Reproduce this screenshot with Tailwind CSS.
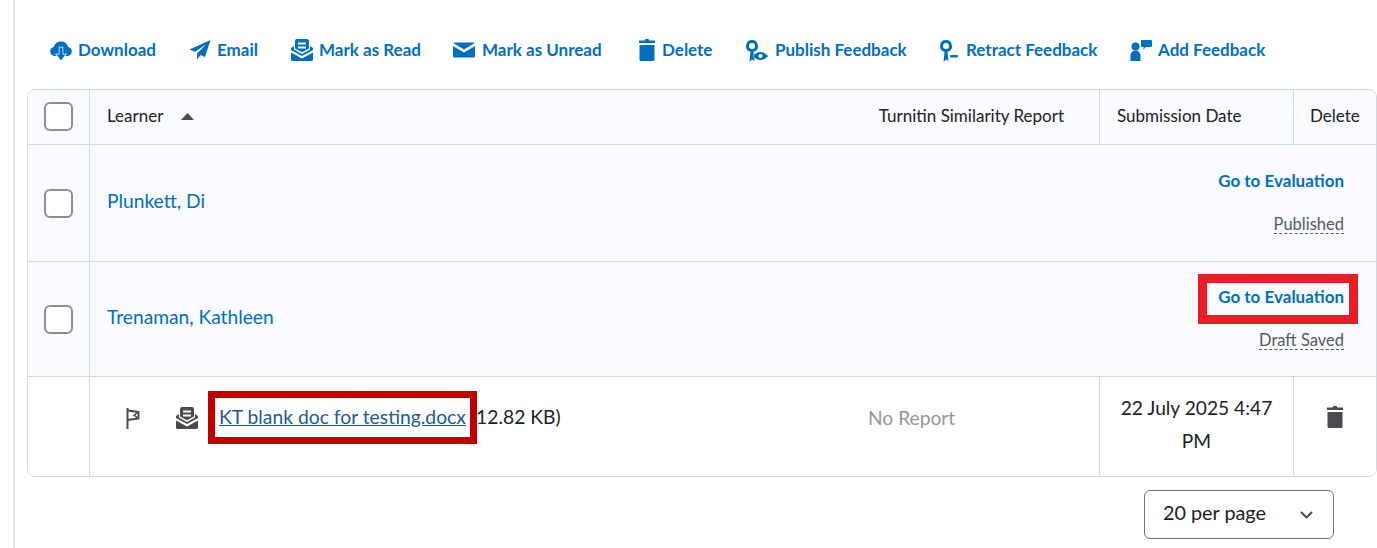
<!DOCTYPE html>
<html lang="en">
<head>
    <meta charset="UTF-8">
    <meta name="viewport" content="width=device-width, initial-scale=1.0">
    <title>Submissions</title>
    <script src="https://cdn.jsdelivr.net/npm/@tailwindcss/browser@4"></script>
</head>
<body class="bg-white font-['Lato','Liberation_Sans',sans-serif] text-[#202122]">
    <div class="w-[1377px] h-[548px] overflow-hidden pl-[13px]">
        <div class="h-full border-l-2 border-[#dfe3e8] pl-[12px]">

            <!-- Toolbar -->
            <div class="h-[89px] pl-[23px] pt-[38px] flex items-start text-[17px] leading-[24px] font-bold text-[#006fbf]">
                <a class="flex items-center h-[24px] w-[139px]">
                    <svg class="w-[22px] h-[22px] mr-[6px]" viewBox="0 0 22 22" fill="#006fbf"><path d="M4.500 17a4.500 4.500 0 0 1-.7-8.900A7.400 7.400 0 0 1 18.200 8.100 4.500 4.500 0 0 1 17.500 17z"/><path d="M9.500 8.500h3v7h3L11 21.500l-4.500-6h3z" stroke="#ffffff" stroke-width="1.500" paint-order="stroke"/></svg>
                    Download
                </a>
                <a class="flex items-center h-[24px] w-[102px]">
                    <svg class="w-[22px] h-[22px] mr-[6px]" viewBox="0 0 22 22" fill="#006fbf"><path d="M21.500 1 .5 10.500l5.500 2.300L17 5.500 8 14.500v6l3.500-4.500 4.500 2z"/></svg>
                    Email
                </a>
                <a class="flex items-center h-[24px] w-[162px]">
                    <svg class="w-[22px] h-[22px] mr-[6px]" viewBox="0 0 22 22" fill="#006fbf"><path fill-rule="evenodd" d="M6 0h10a2 2 0 0 1 2 2v7.500l-7 3.800-7-3.800V2a2 2 0 0 1 2-2zM7 3.500v2h8v-2zM7 7.500v2h8v-2z"/><path d="M0 9l3-2v3.500l8 4.500 8-4.500V7l3 2v2l-11 6L0 11z"/><path d="M0 13.500l11 6 11-6v7a1.500 1.500 0 0 1-1.500 1.500h-19A1.500 1.500 0 0 1 0 20.500z"/></svg>
                    Mark as Read
                </a>
                <a class="flex items-center h-[24px] w-[184px]">
                    <svg class="w-[22px] h-[22px] mr-[7px]" viewBox="0 0 22 22" fill="#006fbf"><path d="M1.500 3.500h19c.5 0 1 .2 1.200.6L11 10.500.3 4.100c.2-.4.7-.6 1.200-.6z"/><path d="M0 7l11 6.500L22 7v10a1.500 1.500 0 0 1-1.500 1.500h-19A1.500 1.500 0 0 1 0 17z"/></svg>
                    Mark as Unread
                </a>
                <a class="flex items-center h-[24px] w-[109px] pl-[1px]">
                    <svg class="w-[18px] h-[24px] mr-[6px]" viewBox="0 0 18 24" fill="#006fbf"><path d="M6.500 2.500 7.500 1h3l1 1.500H17V5H1V2.500z"/><path d="M1.500 7h15v14.500A1.500 1.500 0 0 1 15 23H3a1.500 1.500 0 0 1-1.500-1.500z"/></svg>
                    Delete
                </a>
                <a class="flex items-center h-[24px] w-[193px]">
                    <svg class="w-[22px] h-[24px] mr-[7px]" viewBox="0 0 22 24" fill="#006fbf"><path fill-rule="evenodd" d="M6 2a6 6 0 0 1 1.500 11.800l1 9.200L6 21.500 3.500 24l1-10.200A6 6 0 0 1 6 2zm0 3a3 3 0 1 0 0 6 3 3 0 0 0 0-6z"/><path fill-rule="evenodd" d="M14.500 14c3 0 6 1.800 7.500 4-1.500 2.200-4.500 4-7.500 4S8.500 20.200 7 18c1.500-2.200 4.500-4 7.500-4zm0 2a2 2 0 1 0 0 4 2 2 0 0 0 0-4z" stroke="#ffffff" stroke-width="1" paint-order="stroke"/></svg>
                    Publish Feedback
                </a>
                <a class="flex items-center h-[24px] w-[191px]">
                    <svg class="w-[20px] h-[24px] mr-[7px]" viewBox="0 0 20 24" fill="#006fbf"><path fill-rule="evenodd" d="M7 2a6 6 0 0 1 1.500 11.800l1 9.200L7 21.500 4.500 24l1-10.200A6 6 0 0 1 7 2zm0 3a3 3 0 1 0 0 6 3 3 0 0 0 0-6z"/><rect x="11" y="17" width="8" height="2.500" rx="1"/></svg>
                    Retract Feedback
                </a>
                <a class="flex items-center h-[24px]">
                    <svg class="w-[22px] h-[22px] mr-[6px]" viewBox="0 0 22 22" fill="#006fbf"><circle cx="5.500" cy="7.500" r="4"/><path d="M.5 22v-5.500a5 5 0 0 1 10 0V22z"/><path d="M12 1h9a1 1 0 0 1 1 1v5a1 1 0 0 1-1 1h-5.500L13.500 11V8H12a1 1 0 0 1-1-1V2a1 1 0 0 1 1-1z"/></svg>
                    Add Feedback
                </a>
            </div>

            <!-- Table -->
            <div class="w-[1350px] h-[388px] border border-[#d3d9e3] rounded-lg overflow-hidden flex flex-col text-[17px] leading-[24px]">
                <div class="h-[55px] flex border-b border-[#d3d9e3] bg-[#f9fbff]">
                    <div class="w-[62px] shrink-0 border-r border-[#d3d9e3] flex items-center justify-center pb-[1px]">
                        <span class="w-[29px] h-[29px] rounded-md border-2 border-[#8a8f94] bg-white"></span>
                    </div>
                    <div class="flex-1 flex items-center pl-[17px] pr-[35px] pb-[3px]">
                        <span>Learner</span>
                        <svg class="w-[13px] h-[7px] ml-[18px] mt-[1px]" viewBox="0 0 13 7" fill="#494c4e"><path d="M6.500 0 13 7H0z"/></svg>
                        <span class="ml-auto">Turnitin Similarity Report</span>
                    </div>
                    <div class="w-[194px] shrink-0 border-l border-[#d3d9e3] flex items-center pl-[17px] pb-[3px]">Submission Date</div>
                    <div class="w-[83px] shrink-0 border-l border-[#d3d9e3] flex items-center pl-[16px] pb-[3px]">Delete</div>
                </div>

                <div class="h-[117px] flex border-b border-[#d3d9e3] bg-[#f9fbff]">
                    <div class="w-[62px] shrink-0 border-r border-[#d3d9e3] flex items-center justify-center">
                        <span class="w-[29px] h-[29px] rounded-md border-2 border-[#8a8f94] bg-white"></span>
                    </div>
                    <div class="flex-1 flex items-center justify-between pl-[17px] pr-[32px]">
                        <a class="text-[19.200px] text-[#006fbf] mb-[5px]">Plunkett, Di</a>
                        <div class="flex flex-col items-end mb-[3px]">
                            <a class="font-bold text-[#006fbf]">Go to Evaluation</a>
                            <span class="mt-[22px] text-[16.500px] text-[#565a5c] border-b border-dashed border-[#565a5c] leading-[18px]">Published</span>
                        </div>
                    </div>
                </div>

                <div class="h-[115px] flex border-b border-[#d3d9e3] bg-[#f9fbff]">
                    <div class="w-[62px] shrink-0 border-r border-[#d3d9e3] flex items-center justify-center">
                        <span class="w-[29px] h-[29px] rounded-md border-2 border-[#8a8f94] bg-white"></span>
                    </div>
                    <div class="flex-1 flex items-center justify-between pl-[17px] pr-[32px]">
                        <a class="text-[19.200px] text-[#006fbf] mb-[5px]">Trenaman, Kathleen</a>
                        <div class="flex flex-col items-end mb-[4px]">
                            <a class="relative font-bold text-[#006fbf]">Go to Evaluation
                                <span class="absolute left-[-20px] right-[-14px] top-[-11px] bottom-[-15px] border-[9px] border-[#ed1c24]"></span>
                            </a>
                            <span class="mt-[22px] text-[16.500px] text-[#565a5c] border-b border-dashed border-[#565a5c] leading-[18px]">Draft Saved</span>
                        </div>
                    </div>
                </div>

                <div class="flex-1 flex bg-white">
                    <div class="w-[62px] shrink-0 border-r border-[#d3d9e3]"></div>
                    <div class="flex-1 relative flex items-start pt-[28px] pl-[36px] text-[19.300px]">
                        <svg class="w-[14px] h-[21px] mt-[3px]" viewBox="0 0 14 21" fill="none" stroke="#494c4e" stroke-width="2"><path d="M1.500 0v21"/><path d="M1.500 2.500 12.500 4v6.500l-11 1.500" stroke-linejoin="round"/><path d="M12.500 4 8 7.200l4.500 3.300" stroke-width="1.500"/></svg>
                        <svg class="w-[22px] h-[22px] ml-[36px] mt-[2px]" viewBox="0 0 22 22" fill="#494c4e"><path fill-rule="evenodd" d="M6 0h10a2 2 0 0 1 2 2v7.500l-7 3.800-7-3.800V2a2 2 0 0 1 2-2zM7 3.500v2h8v-2zM7 7.500v2h8v-2z"/><path d="M0 9l3-2v3.500l8 4.500 8-4.500V7l3 2v2l-11 6L0 11z"/><path d="M0 13.500l11 6 11-6v7a1.500 1.500 0 0 1-1.500 1.500h-19A1.500 1.500 0 0 1 0 20.500z"/></svg>
                        <span class="ml-[21px] relative">
                            <a class="text-[#1c5a96] underline">KT blank doc for testing.docx</a>
                            <span class="absolute left-[-11px] top-[-14px] w-[269px] h-[53px] border-[7px] border-[#c00000]"></span>
                        </span>
                        <span class="ml-[5px]">(12.82 KB)</span>
                        <span class="absolute left-[778px] top-[29px] text-[19.200px] text-[#90989d]">No Report</span>
                    </div>
                    <div class="w-[194px] shrink-0 border-l border-[#d3d9e3] flex items-center justify-center text-center text-[19.200px] leading-[33px] px-[17px] pb-[6px]">22 July 2025 4:47 PM</div>
                    <div class="w-[83px] shrink-0 border-l border-[#d3d9e3] flex items-center justify-center pb-[20px]">
                        <svg class="w-[18px] h-[24px]" viewBox="0 0 18 24" fill="#494c4e"><path d="M6.500 2.500 7.500 1h3l1 1.500H17V5H1V2.500z"/><path d="M1.500 7h15v14.500A1.500 1.500 0 0 1 15 23H3a1.500 1.500 0 0 1-1.500-1.500z"/></svg>
                    </div>
                </div>
            </div>

            <!-- Pager -->
            <div class="w-[1307px] mt-[13px] flex justify-end">
                <div class="w-[190px] h-[49px] border border-[#6e7477] rounded-md flex items-center justify-between pl-[18px] pr-[20px] text-[19.800px] pb-[3px]">
                    <span>20 per page</span>
                    <svg class="w-[13px] h-[8px] mt-[3px]" viewBox="0 0 13 8" fill="none" stroke="#494c4e" stroke-width="2" stroke-linecap="round" stroke-linejoin="round"><path d="M1.500 1.500 6.500 6.500l5-5"/></svg>
                </div>
            </div>
        </div>
    </div>
</body>
</html>
